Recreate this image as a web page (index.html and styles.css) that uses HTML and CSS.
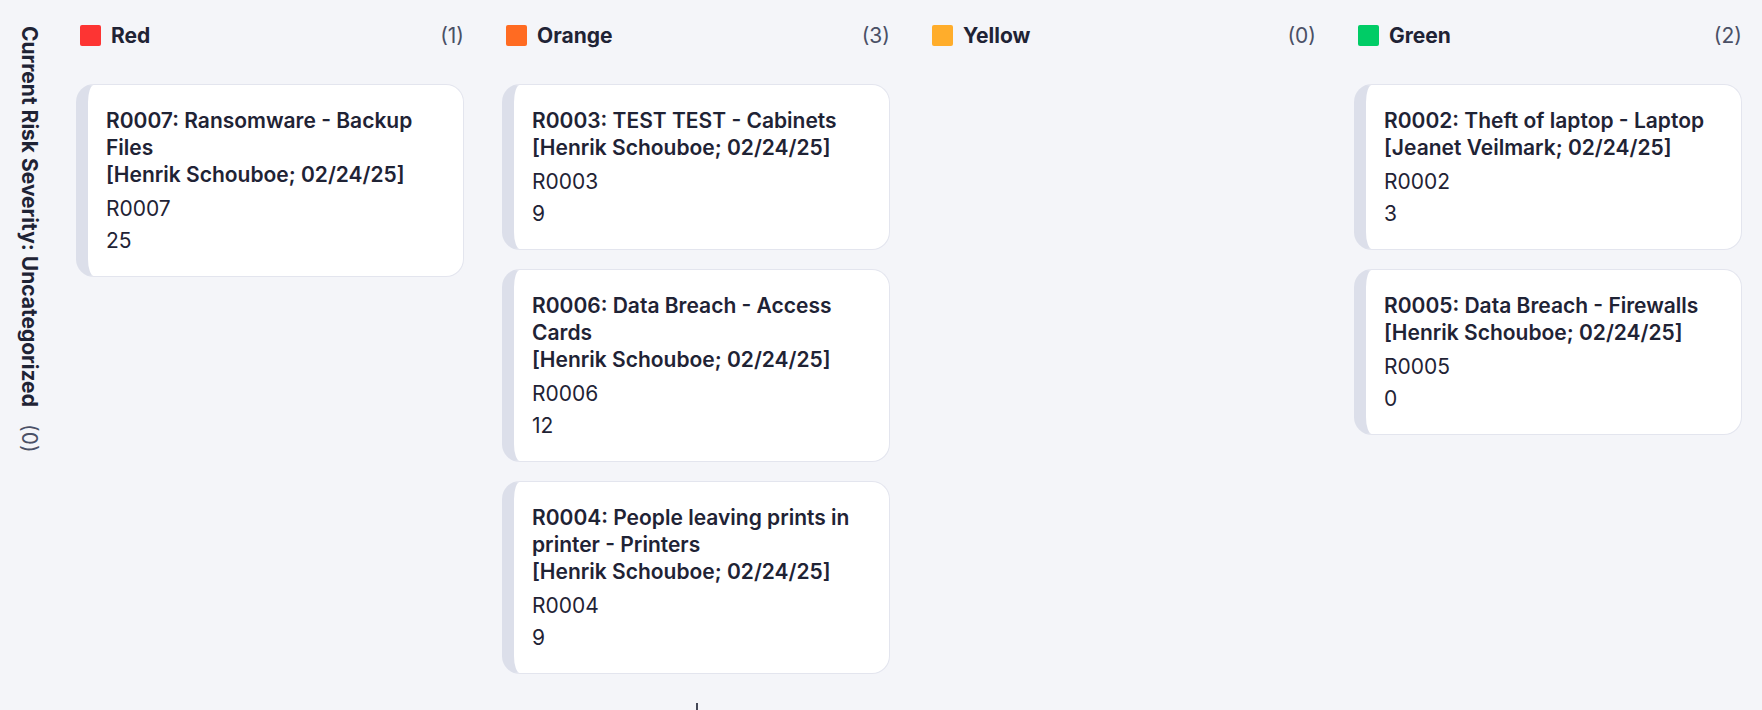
FILE: index.html
```html
<!DOCTYPE html>
<html lang="en">
<head>
<meta charset="utf-8">
<title>Risk Board</title>
<link rel="stylesheet" href="styles.css">
</head>
<body>
<div class="board">
  <div class="side">
    <span class="side-title">Current Risk Severity: Uncategorized</span>
    <span class="side-count">(0)</span>
  </div>
  <div class="columns">
    <section class="column">
      <header class="col-head">
        <span class="swatch swatch-red"></span>
        <span class="col-name">Red</span>
        <span class="col-count">(1)</span>
      </header>
      <div class="cards">
        <article class="card">
          <div class="card-title">R0007: Ransomware - Backup Files<br>[Henrik Schouboe; 02/24/25]</div>
          <div class="card-meta">R0007</div>
          <div class="card-meta">25</div>
        </article>
      </div>
    </section>
    <section class="column">
      <header class="col-head">
        <span class="swatch swatch-orange"></span>
        <span class="col-name">Orange</span>
        <span class="col-count">(3)</span>
      </header>
      <div class="cards">
        <article class="card">
          <div class="card-title">R0003: TEST TEST - Cabinets<br>[Henrik Schouboe; 02/24/25]</div>
          <div class="card-meta">R0003</div>
          <div class="card-meta">9</div>
        </article>
        <article class="card">
          <div class="card-title">R0006: Data Breach - Access Cards<br>[Henrik Schouboe; 02/24/25]</div>
          <div class="card-meta">R0006</div>
          <div class="card-meta">12</div>
        </article>
        <article class="card">
          <div class="card-title">R0004: People leaving prints in printer - Printers<br>[Henrik Schouboe; 02/24/25]</div>
          <div class="card-meta">R0004</div>
          <div class="card-meta">9</div>
        </article>
      </div>
    </section>
    <section class="column">
      <header class="col-head">
        <span class="swatch swatch-yellow"></span>
        <span class="col-name">Yellow</span>
        <span class="col-count">(0)</span>
      </header>
      <div class="cards"></div>
    </section>
    <section class="column">
      <header class="col-head">
        <span class="swatch swatch-green"></span>
        <span class="col-name">Green</span>
        <span class="col-count">(2)</span>
      </header>
      <div class="cards">
        <article class="card">
          <div class="card-title">R0002: Theft of laptop - Laptop<br>[Jeanet Veilmark; 02/24/25]</div>
          <div class="card-meta">R0002</div>
          <div class="card-meta">3</div>
        </article>
        <article class="card">
          <div class="card-title">R0005: Data Breach - Firewalls<br>[Henrik Schouboe; 02/24/25]</div>
          <div class="card-meta">R0005</div>
          <div class="card-meta">0</div>
        </article>
      </div>
    </section>
  </div>
  <span class="resize-tick"></span>
</div>
</body>
</html>
```

FILE: styles.css
```css
* {
  box-sizing: border-box;
}

html, body {
  margin: 0;
  padding: 0;
  height: 100%;
}

body {
  background: #f4f5f9;
  font-family: Inter, "Noto Sans", "Liberation Sans", sans-serif;
  color: #1f2335;
  font-size: 21px;
  line-height: 27px;
  overflow: hidden;
}

.board {
  position: relative;
  display: flex;
  align-items: flex-start;
  height: 100%;
  padding: 21px 20px 0 0;
}

.side {
  writing-mode: vertical-rl;
  width: 76px;
  flex: 0 0 76px;
  padding: 5px 33px 0 0;
  display: flex;
  gap: 17px;
}

.side-title {
  font-weight: 700;
}

.side-count {
  color: #4a5066;
  font-weight: 400;
}

.columns {
  flex: 1;
  display: grid;
  grid-template-columns: repeat(4, minmax(0, 1fr));
  column-gap: 38px;
}

.column {
  display: flex;
  flex-direction: column;
}

.col-head {
  display: flex;
  align-items: center;
  height: 28px;
  padding-left: 4px;
  margin-bottom: 35px;
}

.swatch {
  width: 21px;
  height: 21px;
  border-radius: 2px;
  margin-right: 10px;
  flex: 0 0 auto;
}

.swatch-red { background: #fd3433; }
.swatch-orange { background: #ff6b22; }
.swatch-yellow { background: #ffad2b; }
.swatch-green { background: #00cc66; }

.col-name {
  font-weight: 700;
  flex: 1;
}

.col-count {
  color: #4a5066;
}

.cards {
  display: flex;
  flex-direction: column;
  gap: 19px;
}

.card {
  background: #ffffff;
  border: 1px solid #e3e5ee;
  border-left: 12px solid #dcdfea;
  border-radius: 18px;
  padding: 22px 19px 22px 18px;
}

.card-title {
  font-weight: 600;
  margin-bottom: 7px;
}

.card-meta {
  margin-top: 5px;
  font-weight: 400;
}

.resize-tick {
  position: absolute;
  left: 696px;
  bottom: 0;
  width: 2px;
  height: 7px;
  background: #444857;
}
```
